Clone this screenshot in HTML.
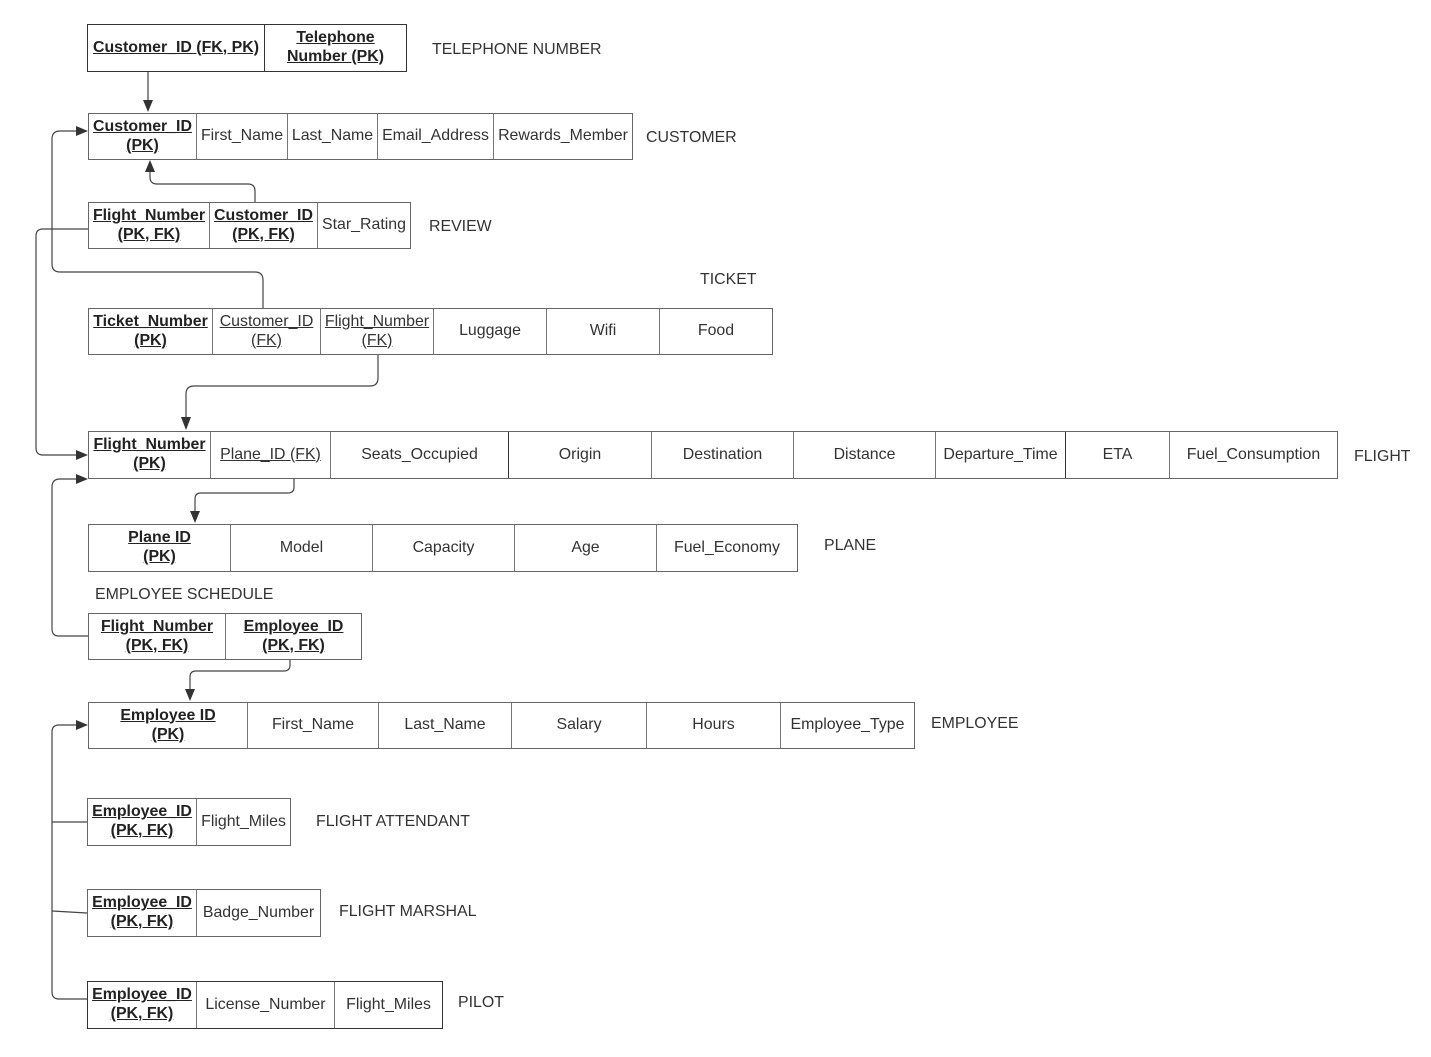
<!DOCTYPE html>
<html><head><meta charset="utf-8">
<style>
html,body{margin:0;padding:0;background:#fff;}
body{width:1431px;height:1057px;position:relative;overflow:hidden;font-family:"Liberation Sans",Arial,sans-serif;font-size:15.9px;color:#333;}
.t{position:absolute;display:flex;border:1px solid #666;box-sizing:border-box;background:#fff;}
.t.k{border-color:#333;}
.c{box-sizing:border-box;border-left:1px solid #777;display:flex;align-items:center;justify-content:center;text-align:center;line-height:19px;height:100%;white-space:nowrap;padding-bottom:2px;}
.c:first-child{border-left:none;}
.c.l{flex:1;}
.p{font-weight:bold;text-decoration:underline;color:#222;}
.u{text-decoration:underline;}
.lab{position:absolute;white-space:nowrap;line-height:18px;color:#333;}
svg{position:absolute;left:0;top:0;}
</style></head><body>
<svg width="1431" height="1057" viewBox="0 0 1431 1057">
<g fill="none" stroke="#444" stroke-width="1.2">
<path d="M148,71 V102"/>
<path d="M263,308 V280 Q263,272 255,272 H60 Q52,272 52,264 V139 Q52,131 60,131 H78"/>
<path d="M255,202 V191 Q255,184 248,184 H157 Q150,184 150,177 V172"/>
<path d="M88,229 H43 Q36,229 36,236 V448 Q36,455 43,455 H78"/>
<path d="M378,355 V378 Q378,386 370,386 H194 Q186,386 186,394 V418"/>
<path d="M294,478 V487 Q294,493 288,493 H201 Q195,493 195,499 V511"/>
<path d="M88,636 H59 Q52,636 52,629 V487 Q52,479 60,479 H78"/>
<path d="M290,659 V665 Q290,671 284,671 H196 Q190,671 190,677 V689"/>
<path d="M78,725 H59 Q52,725 52,732 V992 Q52,999 59,999 H87"/>
<path d="M52,822 H87"/>
<path d="M52,911 L87,913"/>
</g>
<g fill="#333">
<path d="M143,100 L153,100 L148,112 Z"/>
<path d="M76,126 L76,136 L88,131 Z"/>
<path d="M145,172 L155,172 L150,160 Z"/>
<path d="M76,450 L76,460 L88,455 Z"/>
<path d="M181,417 L191,417 L186,430 Z"/>
<path d="M76,474 L76,484 L88,479 Z"/>
<path d="M190,511 L200,511 L195,523 Z"/>
<path d="M185,689 L195,689 L190,701 Z"/>
<path d="M76,720 L76,730 L88,725 Z"/>
</g>
</svg>

<div class="t k" style="left:87px;top:24px;width:320px;height:48px;">
<div class="c" style="width:176px"><span class="p">Customer_ID (FK, PK)</span></div>
<div class="c l" style="border-left-color:#333"><span class="p">Telephone<br>Number (PK)</span></div>
</div>
<div class="lab" style="left:432px;top:41px;">TELEPHONE NUMBER</div>

<div class="t" style="left:88px;top:113px;width:545px;height:47px;">
<div class="c" style="width:107px"><span class="p">Customer_ID<br>(PK)</span></div>
<div class="c" style="width:91px">First_Name</div>
<div class="c" style="width:90px">Last_Name</div>
<div class="c" style="width:116px">Email_Address</div>
<div class="c l">Rewards_Member</div>
</div>
<div class="lab" style="left:646px;top:129px;">CUSTOMER</div>

<div class="t" style="left:88px;top:202px;width:323px;height:47px;">
<div class="c" style="width:120px"><span class="p">Flight_Number<br>(PK, FK)</span></div>
<div class="c" style="width:108px"><span class="p">Customer_ID<br>(PK, FK)</span></div>
<div class="c l">Star_Rating</div>
</div>
<div class="lab" style="left:429px;top:218px;">REVIEW</div>

<div class="lab" style="left:700px;top:271px;">TICKET</div>
<div class="t" style="left:88px;top:308px;width:685px;height:47px;">
<div class="c" style="width:123px"><span class="p">Ticket_Number<br>(PK)</span></div>
<div class="c" style="width:108px"><span class="u">Customer_ID<br>(FK)</span></div>
<div class="c" style="width:113px"><span class="u">Flight_Number<br>(FK)</span></div>
<div class="c" style="width:113px">Luggage</div>
<div class="c" style="width:113px">Wifi</div>
<div class="c l">Food</div>
</div>

<div class="t" style="left:88px;top:431px;width:1250px;height:48px;">
<div class="c" style="width:121px"><span class="p">Flight_Number<br>(PK)</span></div>
<div class="c" style="width:120px"><span class="u">Plane_ID (FK)</span></div>
<div class="c" style="width:178px">Seats_Occupied</div>
<div class="c" style="width:143px;border-left-color:#333">Origin</div>
<div class="c" style="width:142px">Destination</div>
<div class="c" style="width:142px">Distance</div>
<div class="c" style="width:130px">Departure_Time</div>
<div class="c" style="width:104px;border-left-color:#333">ETA</div>
<div class="c l">Fuel_Consumption</div>
</div>
<div class="lab" style="left:1354px;top:448px;">FLIGHT</div>

<div class="t" style="left:88px;top:524px;width:710px;height:48px;">
<div class="c" style="width:141px"><span class="p">Plane ID<br>(PK)</span></div>
<div class="c" style="width:142px">Model</div>
<div class="c" style="width:142px">Capacity</div>
<div class="c" style="width:142px">Age</div>
<div class="c l">Fuel_Economy</div>
</div>
<div class="lab" style="left:824px;top:537px;">PLANE</div>

<div class="lab" style="left:95px;top:586px;">EMPLOYEE SCHEDULE</div>
<div class="t" style="left:88px;top:613px;width:274px;height:47px;">
<div class="c" style="width:136px"><span class="p">Flight_Number<br>(PK, FK)</span></div>
<div class="c l"><span class="p">Employee_ID<br>(PK, FK)</span></div>
</div>

<div class="t" style="left:88px;top:702px;width:827px;height:47px;">
<div class="c" style="width:158px"><span class="p">Employee ID<br>(PK)</span></div>
<div class="c" style="width:131px">First_Name</div>
<div class="c" style="width:133px">Last_Name</div>
<div class="c" style="width:135px">Salary</div>
<div class="c" style="width:134px">Hours</div>
<div class="c l">Employee_Type</div>
</div>
<div class="lab" style="left:931px;top:715px;">EMPLOYEE</div>

<div class="t" style="left:87px;top:798px;width:204px;height:48px;">
<div class="c" style="width:108px"><span class="p">Employee_ID<br>(PK, FK)</span></div>
<div class="c l">Flight_Miles</div>
</div>
<div class="lab" style="left:316px;top:813px;">FLIGHT ATTENDANT</div>

<div class="t" style="left:87px;top:889px;width:234px;height:48px;">
<div class="c" style="width:108px"><span class="p">Employee_ID<br>(PK, FK)</span></div>
<div class="c l">Badge_Number</div>
</div>
<div class="lab" style="left:339px;top:903px;">FLIGHT MARSHAL</div>

<div class="t k" style="left:87px;top:981px;width:356px;height:48px;">
<div class="c" style="width:108px"><span class="p">Employee_ID<br>(PK, FK)</span></div>
<div class="c" style="width:138px">License_Number</div>
<div class="c l">Flight_Miles</div>
</div>
<div class="lab" style="left:458px;top:994px;">PILOT</div>
</body></html>
